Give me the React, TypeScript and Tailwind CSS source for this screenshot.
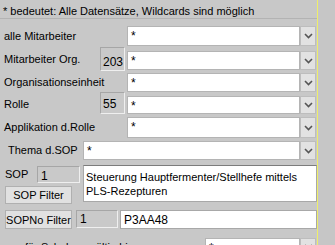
import React from 'react'

function Chevron() {
  return (
    <svg width="9" height="6" viewBox="0 0 9 6">
      <path d="M1 1 L4.5 4.5 L8 1" fill="none" stroke="#555" strokeWidth="1.6" />
    </svg>
  )
}

function Combo({ className, value = '*' }: { className: string; value?: string }) {
  return (
    <div className={`flex flex-1 ${className}`}>
      <div className="flex-1 bg-white border border-[#b4b4b4] pl-[3px] pt-[2px] text-[12px] leading-[14px]">{value}</div>
      <div className="w-[16px] bg-[#e2e2e2] border border-[#bdbdbd] flex items-center justify-center">
        <Chevron />
      </div>
    </div>
  )
}

function ReadBox({ className, value }: { className: string; value: string }) {
  return (
    <div
      className={`bg-[#c9c9c9] border border-[#efefef] border-t-[#a6a6a6] border-l-[#a6a6a6] text-[12px] leading-[14px] ${className}`}
    >
      {value}
    </div>
  )
}

export default function App() {
  return (
    <div className="w-[335px] h-[245px] overflow-hidden bg-[#c8c8c8] flex font-['Liberation_Sans',Arial,sans-serif] text-[11px] leading-[13px] text-black whitespace-nowrap">
      <div className="w-[318px] shrink-0 border-r border-[#eeee6a] flex flex-col">
        <div className="h-[21px] pl-[3px] pt-[5px] border-b border-[#b3b3b3] text-[11px]">
          * bedeutet: Alle Datensätze, Wildcards sind möglich
        </div>

        <div className="flex mt-[7px] h-[20px] pr-[1px]">
          <div className="w-[127px] pl-[4px] self-center">alle Mitarbeiter</div>
          <Combo className="h-[20px]" />
        </div>

        <div className="flex mt-[1px] h-[24px] pr-[1px]">
          <div className="w-[100px] pl-[4px] self-center">Mitarbeiter Org.</div>
          <ReadBox className="w-[25px] h-[24px] pl-[2px] pt-[7px]" value="203" />
          <Combo className="h-[19px] mt-[4px] ml-[2px]" />
        </div>

        <div className="flex mt-[2px] h-[19px] pr-[1px]">
          <div className="w-[127px] pl-[4px] self-center">Organisationseinheit</div>
          <Combo className="h-[19px]" />
        </div>

        <div className="flex h-[22px] pr-[1px]">
          <div className="w-[100px] pl-[4px] self-center pt-[2px]">Rolle</div>
          <ReadBox className="w-[25px] h-[22px] pl-[2px] pt-[4px]" value="55" />
          <Combo className="h-[18px] mt-[4px] ml-[2px]" />
        </div>

        <div className="flex mt-[3px] h-[21px] pr-[1px]">
          <div className="w-[127px] pl-[4px] self-center">Applikation d.Rolle</div>
          <Combo className="h-[21px]" />
        </div>

        <div className="flex mt-[3px] h-[19px] pr-[1px]">
          <div className="w-[83px] pl-[8px] self-center">Thema d.SOP</div>
          <Combo className="h-[19px]" />
        </div>

        <div className="flex mt-[5px]">
          <div className="w-[83px] flex flex-col">
            <div className="flex mt-[1px]">
              <div className="w-[37px] pl-[5px] pt-[2px]">SOP</div>
              <ReadBox className="w-[43px] h-[17px] pl-[3px] pt-[2px]" value="1" />
            </div>
            <button className="ml-[5px] mt-[3px] w-[67px] h-[18px] bg-[#e1e1e1] border border-[#b0b0b0] text-[11px] leading-[14px] whitespace-nowrap">
              SOP Filter
            </button>
          </div>
          <div className="flex-1 h-[37px] bg-white border border-[#a8a8a8] border-t-[#7c7c7c] pl-[2px] pt-[4px] text-[11px] leading-[14px]">
            Steuerung Hauptfermenter/Stellhefe mittels
            <br />
            PLS-Rezepturen
          </div>
        </div>

        <div className="flex mt-[6px]">
          <button className="ml-[5px] w-[67px] h-[19px] bg-[#e1e1e1] border border-[#b0b0b0] text-[11px] leading-[14px] whitespace-nowrap">
            SOPNo Filter
          </button>
          <ReadBox className="ml-[4px] w-[42px] h-[18px] pl-[3px] pt-[1px]" value="1" />
          <div className="ml-[2px] flex-1 h-[19px] bg-white border border-[#a8a8a8] pl-[3px] pt-[2px] text-[12px] leading-[14px]">
            P3AA48
          </div>
        </div>

        <div className="flex mt-[9px] h-[18px] pr-[1px]">
          <div className="flex-1 pl-[25px] pt-[3px]">für Schulung gültig bis</div>
          <Combo className="w-[111px] flex-none h-[18px]" />
        </div>
      </div>
      <div className="flex-1 bg-[#c6c6c6]" />
    </div>
  )
}
